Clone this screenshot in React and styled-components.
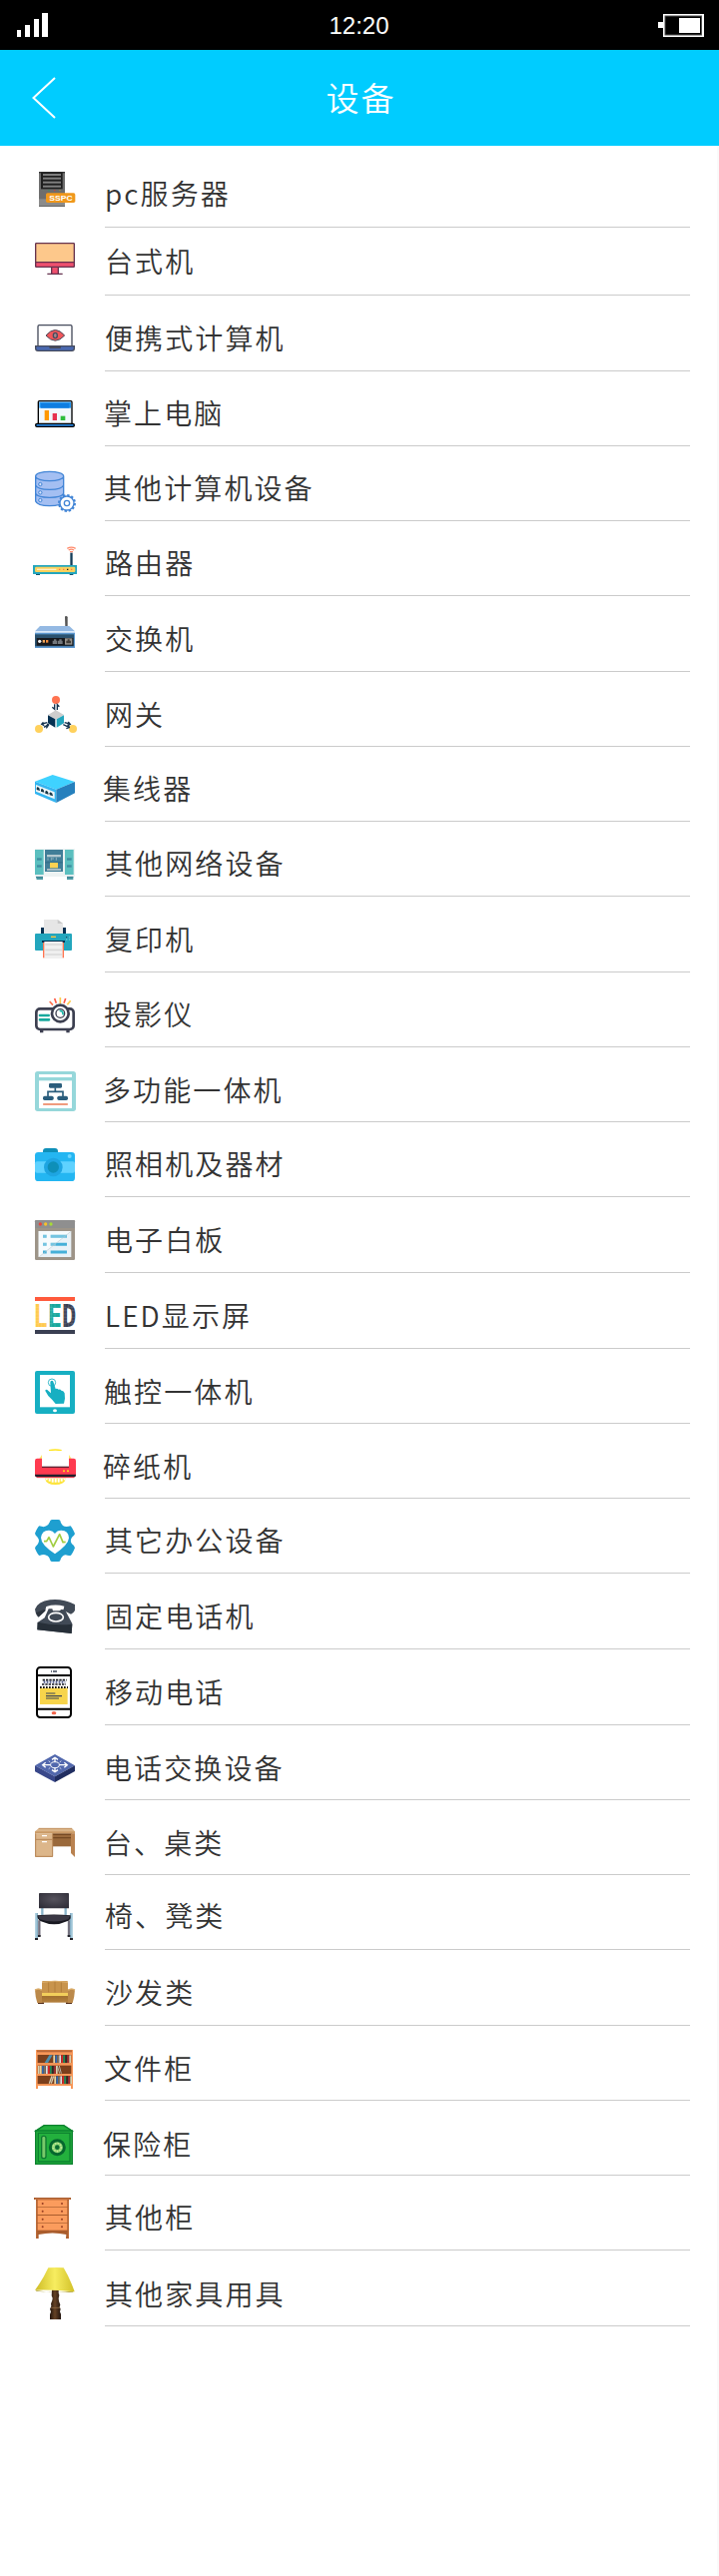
import React from "react";
import styled, { createGlobalStyle } from "styled-components";

const GlobalStyle = createGlobalStyle`
  body {
    margin: 0;
    background: #fff;
    font-family: "Noto Sans CJK SC", "Liberation Sans", sans-serif;
  }
`;

const Screen = styled.div`
  box-sizing: border-box;
  width: 720px;
  min-height: 2580px;
  display: flex;
  flex-direction: column;
  background: #fff;
`;

const StatusBar = styled.div`
  box-sizing: border-box;
  height: 50px;
  padding: 0 15px 0 17px;
  display: grid;
  grid-template-columns: 1fr auto 1fr;
  align-items: center;
  background: #000;
`;

const Clock = styled.span`
  padding: 1px 3px 0 0;
  color: #fff;
  font: 24px/26px "Liberation Sans", sans-serif;
`;

const BatterySlot = styled.span`
  display: flex;
  justify-content: flex-end;
`;

const Header = styled.header`
  box-sizing: border-box;
  height: 96px;
  padding: 0 32px;
  display: grid;
  grid-template-columns: 1fr auto 1fr;
  align-items: center;
  background: #00ccff;
`;

const BackButton = styled.button`
  justify-self: start;
  display: flex;
  padding: 0;
  border: 0;
  background: none;
`;

const Title = styled.h1`
  margin: 0;
  padding: 0 0 2px 3px;
  color: #fff;
  font-size: 33px;
  line-height: 48px;
  font-weight: 350;
  letter-spacing: 2px;
`;

const List = styled.ul`
  flex: 1;
  margin: 0;
  padding: 0 27px 0 0;
  border-right: 2px solid #fafafa;
  list-style: none;
`;

const Row = styled.li`
  display: flex;
  height: ${(p) => p.$height}px;
`;

const IconSlot = styled.span`
  box-sizing: border-box;
  flex: 0 0 105px;
  display: flex;
  align-items: flex-end;
  padding: 0 0 ${(p) => p.$lift}px ${(p) => p.$left}px;

  svg {
    display: block;
    flex: none;
    overflow: visible;
  }
`;

const Label = styled.span`
  box-sizing: border-box;
  flex: 1;
  display: flex;
  align-items: flex-end;
  padding-bottom: ${(p) => p.$lift}px;
  border-bottom: 1px solid #cbcbcb;
  color: #333;
  font-size: 28px;
  line-height: 28px;
  font-weight: 350;
  letter-spacing: 2.1px;
  white-space: nowrap;
`;

const LabelText = styled.span`
  margin-left: ${(p) => p.$shift}px;
`;

/* Every icon is drawn on a grid of three units to the pixel. */
const ServerIcon = () => (
  <>
    <rect x="117" y="66" width="78" height="105" fill="#6d6d6d" />
    <rect x="117" y="148" width="78" height="20" fill="#8b8b8b" />
    <rect x="117" y="168" width="78" height="3" fill="#666" />
    <rect x="117" y="66" width="78" height="4" fill="#333" />
    <rect x="123" y="68" width="65" height="50" fill="#1f1f1f" />
    {[72, 83, 95, 107].map((y) => (
      <rect key={y} x="129" y={y} width="54" height="6" fill="#7f7f7f" />
    ))}
    <circle cx="131" cy="122" r="2" fill="#6a7a6a" />
    <circle cx="147" cy="122" r="2" fill="#2b9a62" />
    <circle cx="164" cy="122" r="2" fill="#e03a2a" />
    <circle cx="180" cy="122" r="2" fill="#a89a30" />
    <rect x="138" y="130" width="88" height="29" rx="5" fill="#f0981c" />
    <text x="148" y="153" fontSize="20" fontWeight="700" fontFamily="Liberation Sans, sans-serif" textLength="70" lengthAdjust="spacingAndGlyphs" fill="#fff">SSPC</text>
  </>
);

const DesktopIcon = () => (
  <>
    <rect x="107" y="281" width="116" height="71" rx="3" fill="#fdc88b" />
    <rect x="107" y="338" width="116" height="14" fill="#f0506e" />
    <rect x="156" y="352" width="18" height="20" fill="#f0506e" />
    <path d="M109 281H221Q223 281 223 283V350Q223 352 221 352H109Q107 352 107 350V283Q107 281 109 281ZM107 338H223M155 353V371M175 353V371M142 373H188" fill="none" stroke="#66334f" strokeWidth="4" />
  </>
);

const LaptopEyeIcon = () => (
  <>
    <rect x="114" y="527" width="102" height="65" rx="4" fill="#fff" stroke="#464b5c" strokeWidth="4" />
    <path d="M138 558Q166 525 194 558Q166 589 138 558Z" fill="#f1565a" stroke="#464b5c" strokeWidth="3" />
    <ellipse cx="166" cy="558" rx="6" ry="8" fill="#a9858c" stroke="#464b5c" strokeWidth="4" />
    <path d="M107 590H223V597Q223 604 216 604H114Q107 604 107 597Z" fill="#4a68b0" stroke="#464b5c" strokeWidth="4" />
    <rect x="148" y="589" width="35" height="8" rx="2" fill="#464b5c" />
  </>
);

const LaptopChartIcon = () => (
  <>
    <rect x="115" y="65" width="101" height="70" rx="3" fill="#f0f7fd" stroke="#000" strokeWidth="4" />
    <rect x="118" y="68" width="95" height="18" fill="#2196f3" />
    <rect x="123" y="72" width="85" height="14" fill="#0f7de0" />
    <rect x="134" y="93" width="13" height="30" fill="#ff9800" />
    <rect x="158" y="102" width="13" height="21" fill="#e6304f" />
    <rect x="182" y="110" width="14" height="13" fill="#2dbd3d" />
    <rect x="107" y="133" width="116" height="9" rx="4" fill="#2380d8" stroke="#000" strokeWidth="4" />
  </>
);

const DatabaseIcon = () => (
  <>
    <path d="M107 291V366Q112 380 149 380Q186 380 191 366V291Z" fill="#a4bff2" />
    <ellipse cx="149" cy="291" rx="42" ry="14" fill="#a4bff2" />
    <path d="M107 291V366Q112 380 149 380Q186 380 191 366V291M107 291A42 14 0 0 1 191 291A42 14 0 0 1 107 291M107 318Q112 331 149 331Q186 331 191 318M107 343Q112 355 149 355Q186 355 191 343" fill="none" stroke="#4285d6" strokeWidth="4" />
    {[315, 340, 363].map((y) => (
      <circle key={y} cx="121" cy={y} r="5" fill="#d7e4fb" stroke="#4285d6" strokeWidth="3" />
    ))}
    <circle cx="201" cy="372" r="24" fill="none" stroke="#4285d6" strokeWidth="6" strokeDasharray="7 5.57" />
    <circle cx="201" cy="372" r="21" fill="#fff" stroke="#4285d6" strokeWidth="4" />
    <circle cx="201" cy="372" r="8" fill="#fff" stroke="#4285d6" strokeWidth="4" />
  </>
);

const RouterIcon = () => (
  <>
    <path d="M202 508Q214 501 227 508M206 513Q214 508 222 513M210 518H219" fill="none" stroke="#ff8a6b" strokeWidth="4" />
    <rect x="211" y="521" width="7" height="38" fill="#143e5a" />
    <rect x="108" y="582" width="12" height="6" fill="#12556f" />
    <rect x="209" y="582" width="11" height="6" fill="#12556f" />
    <rect x="99" y="558" width="132" height="27" fill="#23a6bd" />
    <rect x="105" y="563" width="121" height="16" rx="4" fill="#fbd15c" />
    <rect x="111" y="569" width="58" height="4" fill="#fff0c8" />
    <path d="M177 571H181M189 571H193M213 571H217" stroke="#ff7750" strokeWidth="4" />
    <path d="M201 571H205" stroke="#222" strokeWidth="4" />
  </>
);

const SwitchIcon = () => (
  <>
    <path d="M195 24Q195 21 198 21Q203 21 203 25V54H196Z" fill="#555" />
    <path d="M120 51H208L225 67H105Z" fill="#94b9e3" />
    <rect x="105" y="66" width="120" height="4" fill="#dceafb" />
    <rect x="105" y="71" width="120" height="46" fill="#5c97cf" />
    <rect x="105" y="76" width="117" height="36" fill="#2b526f" />
    <rect x="110" y="87" width="110" height="23" fill="#17191d" />
    <circle cx="119" cy="97" r="5" fill="#eee" />
    <rect x="128" y="93" width="7" height="8" fill="#f2a65a" />
    <rect x="138" y="93" width="7" height="8" fill="#f08b3c" />
    <path d="M158 105V95H162V91H169V95H172V105ZM174 105V95H178V91H185V95H188V105Z" fill="#72777c" />
    <rect x="195" y="88" width="22" height="19" fill="#97938c" />
    <path d="M199 103V95H203V91H209V95H213V103Z" fill="#403d39" />
  </>
);

const GatewayIcon = () => (
  <>
    <circle cx="168" cy="273" r="12" fill="#ff7350" />
    <circle cx="117" cy="360" r="12" fill="#ffd15c" />
    <circle cx="219" cy="360" r="12" fill="#ffd15c" />
    <path d="M168 304L192 318L168 332L144 318Z" fill="#cdcdcd" />
    <path d="M144 319L166 331V356L144 343Z" fill="#043051" />
    <path d="M170 331L192 319V343L170 356Z" fill="#23a6bd" />
    <path d="M164 286V301L157 295M172 303V287L178 293M126 345L142 341M130 340L125 346L133 350M146 347L132 355M141 345L146 348L139 358M210 345L194 341M205 339L211 346L202 349M190 347L207 355M206 349L208 356L199 359" fill="none" stroke="#17344f" strokeWidth="4" />
  </>
);

const HubIcon = () => (
  <>
    <path d="M158 498L225 519L169 542L105 518Z" fill="#3fd2ff" />
    <path d="M105 518L169 542V582L105 555Z" fill="#33b5f0" />
    <path d="M225 519V553L169 582V542Z" fill="#2680bd" />
    <path d="M108 528L164 550V571L108 548Z" fill="#edf5f7" />
    {[[115, 541], [128, 546], [141, 552], [154, 557]].map(([x, y]) => (
      <path key={x} d={`M${x - 5} ${y + 2}V${y - 4}L${x - 2} ${y - 7}L${x + 3} ${y - 3}L${x + 5} ${y + 5}Z`} fill="#173848" />
    ))}
  </>
);

const NetworkCabinetIcon = () => (
  <>
    <rect x="105" y="30" width="120" height="84" fill="#edf3f3" />
    {[105, 195].map((x) => (
      <g key={x}>
        <rect x={x} y="33" width="26" height="75" fill="#5bbfbf" />
        <rect x={x + 6} y="58" width="14" height="7" fill="#3e8ea0" />
        <rect x={x + 6} y="79" width="14" height="7" fill="#3e8ea0" />
      </g>
    ))}
    <rect x="135" y="33" width="54" height="66" fill="#417e98" />
    <rect x="141" y="48" width="42" height="7" fill="#b4c9d0" />
    <path d="M144 58V65M154 56V65M159 56V63M169 56V65" stroke="#8eb0bd" strokeWidth="3" />
    <rect x="136" y="70" width="52" height="3" fill="#2f6b85" />
    <rect x="150" y="72" width="24" height="16" fill="#fdd252" />
    <rect x="141" y="90" width="42" height="6" fill="#a7bcc4" />
    <path d="M108 114H129V123H110ZM201 114H220V123H201Z" fill="#4d9aa5" />
    <path d="M108 115H129M201 115H220" stroke="#3c7f90" strokeWidth="3" />
  </>
);

const PrinterIcon = () => (
  <>
    <rect x="123" y="267" width="75" height="18" fill="#043051" />
    <rect x="132" y="243" width="57" height="42" fill="#e6e6e6" />
    <path d="M173 243H189V255Z" fill="#fff" />
    <path d="M173 243V255H189Z" fill="#c9c9c9" />
    <rect x="105" y="285" width="111" height="51" rx="3" fill="#23a6bd" />
    <rect x="153" y="293" width="15" height="4" fill="#ffc43d" />
    <rect x="126" y="306" width="69" height="6" fill="#043051" />
    <rect x="129" y="312" width="63" height="46" fill="#ff7550" />
    <rect x="133" y="309" width="55" height="51" fill="#f0f0f0" />
    <path d="M136 318H186M136 334H186M136 348H186" stroke="#d9d9d9" strokeWidth="5" />
    <path d="M198 296H202M207 296H210M198 303H202M207 303H210" stroke="#6ac6d4" strokeWidth="4" />
    <rect x="198" y="294" width="4" height="4" fill="#14516b" />
  </>
);

const ProjectorIcon = () => (
  <>
    <path d="M149 489L159 500" stroke="#ff7350" strokeWidth="5" />
    <path d="M164 480L169 494M197 480L192 494" stroke="#ff5a45" strokeWidth="5" />
    <path d="M181 477V495M202 499L212 487" stroke="#ffcb4f" strokeWidth="5" />
    <path d="M125 574V583M204 574V583" stroke="#3c3f50" strokeWidth="10" />
    <rect x="109" y="511" width="112" height="62" rx="11" fill="#fff" stroke="#3c3f50" strokeWidth="8" />
    <circle cx="181" cy="525" r="25" fill="#fff" stroke="#3c3f50" strokeWidth="8" />
    <circle cx="181" cy="525" r="13" fill="#fff" stroke="#3c3f50" strokeWidth="4" />
    <path d="M179 517Q190 516 189 529" fill="none" stroke="#18b7a8" strokeWidth="5" />
    <path d="M120 531H146M120 544H147" stroke="#18a99d" strokeWidth="8" strokeLinecap="round" />
  </>
);

const MultifunctionIcon = () => (
  <>
    <rect x="105" y="39" width="123" height="120" rx="8" fill="#96d7da" />
    <rect x="117" y="48" width="99" height="9" fill="#fff" />
    <rect x="117" y="67" width="99" height="83" fill="#fff" />
    <path d="M166 88V101M144 116V100H189V116" fill="none" stroke="#2a5d7c" strokeWidth="5" />
    <rect x="147" y="75" width="39" height="14" rx="4" fill="#2a5d7c" />
    <rect x="129" y="113" width="32" height="13" rx="5" fill="#2a5d7c" />
    <rect x="172" y="113" width="32" height="13" rx="5" fill="#2a5d7c" />
    <rect x="129" y="135" width="75" height="6" rx="2" fill="#f09b7e" />
  </>
);

const CameraIcon = () => (
  <>
    <path d="M129 284V279Q129 270 138 270H165Q174 270 174 279V284Z" fill="#0e8fb8" />
    <rect x="105" y="282" width="120" height="87" rx="10" fill="#24b6f2" />
    <rect x="105" y="310" width="120" height="34" rx="6" fill="#5fd2ff" />
    <circle cx="160" cy="327" r="28" fill="#1ea5e2" />
    <circle cx="160" cy="327" r="17" fill="#0e8fb8" />
    <circle cx="209" cy="294" r="6" fill="#6cd6ff" />
  </>
);

const WhiteboardIcon = () => (
  <>
    <rect x="105" y="486" width="120" height="120" rx="4" fill="#9d9488" />
    <path d="M105 510V490Q105 486 109 486H221Q225 486 225 490V510Z" fill="#8f8f8f" />
    <circle cx="121" cy="498" r="5" fill="#e9443c" />
    <circle cx="137" cy="498" r="5" fill="#f6c22b" />
    <circle cx="153" cy="498" r="5" fill="#a7dc35" />
    <rect x="116" y="519" width="98" height="78" fill="#e9f2f8" />
    <path d="M116 519H214L116 597Z" fill="#f7fbfd" />
    {[535, 559, 582].map((y) => (
      <path key={y} d={`M129 ${y}H140M152 ${y}H201`} stroke="#45b0d8" strokeWidth="9" />
    ))}
    <path d="M129 535H140M152 535H200M129 559H140M152 559H168" stroke="#fff" strokeWidth="9" opacity="0.25" />
    <path d="M118 596L213 520" stroke="#b9c4c9" strokeWidth="1.5" />
  </>
);

const LedIcon = () => (
  <>
    <rect x="105" y="27" width="120" height="12" fill="#ff5a3c" />
    <rect x="105" y="126" width="120" height="12" fill="#3a3f52" />
    <text x="100" y="117" fontFamily="DejaVu Sans Mono, monospace" fontWeight="700" fontSize="94" textLength="129" lengthAdjust="spacingAndGlyphs">
      <tspan fill="#ffc94d">L</tspan>
      <tspan fill="#16a79c">E</tspan>
      <tspan fill="#3a3f52">D</tspan>
    </text>
    <path d="M105 58H225M105 68H225M105 78H225M105 88H225M105 98H225M105 107H225M115 48V117M125 48V117M135 48V117M155 48V117M165 48V117M195 48V117M206 48V117M216 48V117" stroke="#fff" strokeWidth="1" opacity="0.35" />
  </>
);

const TouchIcon = () => (
  <>
    <rect x="105" y="249" width="120" height="129" rx="6" fill="#17afc2" />
    <rect x="120" y="261" width="90" height="97" fill="#fff" />
    <ellipse cx="165" cy="368" rx="6" ry="4.5" fill="#fff" />
    <circle cx="156" cy="284" r="11" fill="none" stroke="#17afc2" strokeWidth="2.5" />
    <path d="M151 284Q151 278 156 278Q160 278 161 284L167 303Q172 300 176 305Q181 303 184 308Q191 307 194 316L195 332L192 347L167 348L157 336Q143 325 136 309Q136 304 142 306L153 316Z" fill="#17afc2" />
  </>
);

const ShredderIcon = () => (
  <>
    <path d="M147 488Q166 484 185 488" fill="none" stroke="#ffe51f" strokeWidth="4" />
    <path d="M118 513L126 501V513ZM207 501L215 513H207Z" fill="#fdea6a" />
    <path d="M135 572H198Q193 591 166 591Q139 591 135 572Z" fill="#fde43a" />
    <rect x="105" y="512" width="123" height="57" rx="7" fill="#ff3b50" />
    <path d="M105 560H228Q228 568 221 568H112Q105 568 105 560Z" fill="#22202c" />
    <path d="M111 569H222" stroke="#e33a4b" strokeWidth="3" />
    <rect x="126" y="490" width="81" height="48" fill="#fff" />
    <rect x="126" y="536" width="81" height="4" fill="#612130" />
    <circle cx="192" cy="550" r="3" fill="#ffe31f" />
    <circle cx="204" cy="550" r="3" fill="#ffe31f" />
    {[137, 146, 155, 164, 173, 182, 191].map((x, i) => (
      <rect key={x} x={x} y="573" width="6" height={[4, 8, 11, 11, 11, 8, 4][i]} fill="#fff" />
    ))}
  </>
);

const GearHeartIcon = () => (
  <>
    <path d="M151 39Q153 36 157 36H175Q179 36 181 39Q183 49 189 54Q197 60 212 55Q216 59 225 78Q225 82 216 89Q209 99 216 109Q225 115 225 121Q218 138 213 143Q208 146 197 142Q185 144 181 158Q180 162 175 162H157Q152 162 151 158Q147 145 139 143Q131 139 119 144Q114 143 105 122Q105 117 113 110Q121 99 113 89Q105 82 105 77Q112 60 118 55Q133 60 139 55Q148 50 151 39Z" fill="#1e9fd0" />
    <path d="M165 139Q123 111 123 90Q126 67 148 68Q159 69 165 78Q171 68 184 68Q206 68 207 91Q206 111 165 139Z" fill="#fff" />
    <path d="M132 101H140L147 89L160 117L179 80L189 104L197 103" fill="none" stroke="#a1cd42" strokeWidth="5" strokeLinejoin="round" />
  </>
);

const TelephoneIcon = () => (
  <>
    <path d="M105 305Q113 283 150 277Q187 272 225 291V309Q221 317 213 320L190 308L193 296Q165 289 139 297L135 311L116 329Q108 325 105 305Z" fill="#414a56" />
    <path d="M116 328L138 308L132 306L108 316Z" fill="#2c333d" />
    <path d="M146 304H157L159 310H179L184 306L195 307L217 349L215 378L112 367L113 345L134 331Z" fill="#414a56" />
    <path d="M113 344Q162 355 217 350L215 378L112 367Z" fill="#272f38" />
    <ellipse cx="168" cy="329" rx="22" ry="13" fill="#414a56" stroke="#fff" strokeWidth="5" />
  </>
);

const MobileIcon = () => (
  <>
    <rect x="111" y="480" width="102" height="150" rx="10" fill="#fff" stroke="#000" strokeWidth="6" />
    <path d="M111 504H213M111 605H213" stroke="#000" strokeWidth="6" />
    <path d="M153 492H156M159 492H171" stroke="#3d4557" strokeWidth="4" />
    <rect x="120" y="538" width="83" height="53" fill="#f7d44b" />
    <rect x="120" y="516" width="83" height="26" fill="#fff" />
    <path d="M128 518H200M126 531H198" stroke="#16181f" strokeWidth="5" strokeDasharray="7 3" />
    <path d="M131 524H196" stroke="#4e5a8c" strokeWidth="7" strokeDasharray="5 4" />
    <path d="M120 540H204" stroke="#111" strokeWidth="6" strokeDasharray="5 4" />
    <path d="M138 558H166M138 566H186M138 573H177" stroke="#3d4557" strokeWidth="3.5" />
    <ellipse cx="162" cy="617" rx="7" ry="5" fill="#f1654c" />
  </>
);

const ExchangeIcon = () => (
  <>
    <path d="M165 51L225 85L165 118L105 85Z" fill="#5268ad" />
    <path d="M105 85L165 118V135L105 103Z" fill="#39488a" />
    <path d="M225 85V102L165 135V118Z" fill="#202d60" />
    <ellipse cx="165" cy="83" rx="13" ry="9" fill="#5268ad" stroke="#fff" strokeWidth="3" />
    <path d="M165 74V62M156 67L165 61L174 67M165 92V103M156 98L165 104L174 98M152 83H131M137 76L128 83L137 91M178 83H199M193 76L202 83L193 91" fill="none" stroke="#fff" strokeWidth="4" />
    <path d="M151 75L146 71M179 75L184 71M151 91L146 95M179 91L184 95" stroke="#cfd6ef" strokeWidth="3" />
  </>
);

const DeskIcon = () => (
  <>
    <path d="M117 273H216L225 283V289H105V283Z" fill="#dab487" />
    <path d="M116 274H216" stroke="#c39362" strokeWidth="3" />
    <rect x="105" y="283" width="120" height="6" fill="#ca9a66" />
    <rect x="158" y="289" width="57" height="39" fill="#9a693b" />
    <path d="M158 292H215M158 302H215" stroke="#754922" strokeWidth="4" />
    <path d="M213 289H225V360L213 348Z" fill="#b98250" />
    <rect x="105" y="289" width="54" height="71" fill="#dcb68a" />
    <path d="M107 289V358H158V289M107 307H158" fill="none" stroke="#b68556" strokeWidth="3" />
    <path d="M126 296H141M126 314H141" stroke="#fff" strokeWidth="4" />
  </>
);

const ChairIcon = () => (
  <>
    <defs>
      <radialGradient id="chairBack" cx="0.5" cy="0.4" r="0.8">
        <stop offset="0" stopColor="#56535d" />
        <stop offset="1" stopColor="#292832" />
      </radialGradient>
    </defs>
    <path d="M127 512V535M197 512V535" stroke="#8bb5cb" strokeWidth="7" />
    <path d="M118 550V598M207 550V598" stroke="#74717e" strokeWidth="7" />
    <path d="M110 528V605M214 528V605" stroke="#87b0c6" strokeWidth="8" />
    <path d="M108 528V603M216 528V603" stroke="#b7d9e8" strokeWidth="3" />
    <path d="M105 606H114M210 606H219M114 597H122M203 597H211" stroke="#23232a" strokeWidth="6" />
    <rect x="117" y="468" width="90" height="46" rx="2" fill="url(#chairBack)" />
    <path d="M112 535Q162 530 212 535Q214 550 201 553Q163 571 123 553Q112 548 112 535Z" fill="#181820" />
    <path d="M114 536Q162 532 210 536L205 547Q163 560 119 547Z" fill="#3a3844" />
  </>
);

const SofaIcon = () => (
  <>
    <defs>
      <linearGradient id="sofaSeat" x1="0" y1="0" x2="0" y2="1">
        <stop offset="0" stopColor="#ddb243" />
        <stop offset="0.35" stopColor="#a27130" />
        <stop offset="1" stopColor="#b58240" />
      </linearGradient>
    </defs>
    <path d="M114 106H132V111H114ZM198 106H216V111H198Z" fill="#55301c" />
    <rect x="126" y="42" width="78" height="40" rx="4" fill="#c8944c" />
    <path d="M146 44V76M165 44V76M184 44V76" stroke="#b37f3a" strokeWidth="3" />
    <path d="M126 46Q165 39 204 46" fill="none" stroke="#dfb372" strokeWidth="3" />
    <rect x="120" y="79" width="90" height="28" fill="url(#sofaSeat)" />
    <rect x="126" y="78" width="78" height="9" fill="#f2cf5b" />
    <path d="M105 68Q115 62 126 68V108H112Q106 90 105 68ZM225 68Q215 62 204 68V108H218Q224 90 225 68Z" fill="#bb894a" />
    <path d="M105 70Q115 63 125 70M225 70Q215 63 205 70" fill="none" stroke="#dcae6b" strokeWidth="4" />
  </>
);

const bookColors = ["#d8d1b0", "#2b2b2b", "#d8242c", "#74726a", "#ead6a0", "#9a2830", "#1d8c58", "#dbe0e4", "#2f69b2"];
const BookRow = ({ x, y, count }) =>
  Array.from({ length: count }, (_, i) => (
    <rect key={i} x={x + i * 6} y={y} width="5" height="24" fill={bookColors[(i * 4 + y) % bookColors.length]} />
  ));

const BookcaseIcon = () => (
  <>
    <path d="M108 249H219V366H213V357H114V366H108Z" fill="#f89757" />
    <rect x="111" y="250" width="105" height="6" fill="#b7673a" />
    <rect x="113" y="264" width="101" height="25" fill="#7b3f1c" />
    <rect x="113" y="296" width="101" height="25" fill="#7b3f1c" />
    <rect x="113" y="327" width="101" height="25" fill="#7b3f1c" />
    <path d="M134 288L148 265H158L144 288Z" fill="#4b8fae" />
    <BookRow x={160} y={265} count={9} />
    <BookRow x={114} y={297} count={10} />
    <path d="M172 297L179 320M178 297L184 320" stroke="#b7b5aa" strokeWidth="3" />
    <path d="M148 350L156 328M154 350L161 328" stroke="#d4c9b0" strokeWidth="4" />
    <BookRow x={163} y={328} count={9} />
    <path d="M112 291H215M112 323H215M110 354H216" stroke="#f89757" strokeWidth="4" />
  </>
);

const SafeIcon = () => (
  <>
    <path d="M132 474H192L219 492V594H105V492Z" fill="#23b03d" />
    <path d="M133 476H191L216 492H108ZM107 492H217V592H107ZM115 499H210V585H115Z" fill="none" stroke="#0d8230" strokeWidth="4" />
    <rect x="125" y="508" width="13" height="67" rx="6" fill="#78c969" stroke="#0d7a30" strokeWidth="4" />
    <circle cx="172" cy="542" r="21" fill="#85d671" stroke="#06672e" strokeWidth="9" />
    <circle cx="172" cy="542" r="12" fill="none" stroke="#c8e69b" strokeWidth="5" strokeDasharray="4 4" />
    <circle cx="172" cy="542" r="7" fill="#0b6b32" />
  </>
);

const DresserIcon = () => (
  <>
    <path d="M108 129H207V246H198L199 234Q158 225 116 234V246H108Z" fill="#aa5d2d" />
    <rect x="102" y="123" width="111" height="6" fill="#a85b2c" />
    <path d="M105 127H210" stroke="#d98a57" strokeWidth="2" />
    {[130, 153, 177, 200].map((y) => (
      <g key={y}>
        <rect x="113" y={y} width="89" height="21" fill="#fb9c5d" />
        <circle cx="128" cy={y + 11} r="3" fill="#983e22" />
        <circle cx="186" cy={y + 11} r="3" fill="#983e22" />
      </g>
    ))}
    <path d="M110 132V245M205 132V245" stroke="#c77642" strokeWidth="2" />
  </>
);

const LampIcon = () => (
  <>
    <defs>
      <linearGradient id="lampShade">
        <stop offset="0" stopColor="#cdbb25" />
        <stop offset="0.5" stopColor="#f7ed60" />
        <stop offset="1" stopColor="#d1c028" />
      </linearGradient>
      <linearGradient id="lampBase">
        <stop offset="0" stopColor="#21130c" />
        <stop offset="0.45" stopColor="#664225" />
        <stop offset="1" stopColor="#21130c" />
      </linearGradient>
    </defs>
    <path d="M107 401Q165 414 223 403L219 407Q165 410 109 404Z" fill="#b2a33c" />
    <path d="M156 400H176V410L178 416L176 426Q176 435 181 445L179 452L182 458L180 466L183 473V489H150V474L153 466L150 458L154 449L153 442Q158 432 158 425L155 418Z" fill="url(#lampBase)" />
    <path d="M145 334Q168 332 191 334Q210 365 224 406Q165 399 105 401Q130 367 145 334Z" fill="url(#lampShade)" />
    <path d="M153 454H181" stroke="#a07a4f" strokeWidth="2" />
  </>
);

const devices = [
  { name: "pc服务器", height: 82, lift: 20, indent: 0, icon: ServerIcon, box: [117, 66, 108, 105], iconLift: 21 },
  { name: "台式机", height: 68, lift: 20, indent: 0, icon: DesktopIcon, box: [105, 279, 120, 96], iconLift: 21 },
  { name: "便携式计算机", height: 76, lift: 19, indent: 0, icon: LaptopEyeIcon, box: [105, 525, 120, 81], iconLift: 20 },
  { name: "掌上电脑", height: 75, lift: 19, indent: -1, icon: LaptopChartIcon, box: [105, 63, 120, 81], iconLift: 19 },
  { name: "其他计算机设备", height: 75, lift: 19, indent: -1, icon: DatabaseIcon, box: [105, 276, 123, 123], iconLift: 9 },
  { name: "路由器", height: 75, lift: 19, indent: 0, icon: RouterIcon, box: [99, 504, 132, 84], iconLift: 21 },
  { name: "交换机", height: 76, lift: 19, indent: 0, icon: SwitchIcon, box: [105, 21, 120, 96], iconLift: 24 },
  { name: "网关", height: 75, lift: 18, indent: 0, icon: GatewayIcon, box: [105, 261, 126, 111], iconLift: 14 },
  { name: "集线器", height: 75, lift: 19, indent: -2, icon: HubIcon, box: [105, 498, 120, 84], iconLift: 19 },
  { name: "其他网络设备", height: 75, lift: 19, indent: 0, icon: NetworkCabinetIcon, box: [105, 30, 120, 93], iconLift: 17 },
  { name: "复印机", height: 76, lift: 19, indent: 0, icon: PrinterIcon, box: [105, 243, 111, 117], iconLift: 14 },
  { name: "投影仪", height: 75, lift: 19, indent: -1, icon: ProjectorIcon, box: [105, 477, 120, 108], iconLift: 14 },
  { name: "多功能一体机", height: 75, lift: 18, indent: -2, icon: MultifunctionIcon, box: [105, 39, 123, 120], iconLift: 11 },
  { name: "照相机及器材", height: 75, lift: 19, indent: 0, icon: CameraIcon, box: [105, 270, 120, 99], iconLift: 16 },
  { name: "电子白板", height: 76, lift: 19, indent: 0, icon: WhiteboardIcon, box: [105, 486, 120, 120], iconLift: 13 },
  { name: "LED显示屏", height: 76, lift: 19, indent: 0, icon: LedIcon, box: [105, 27, 120, 111], iconLift: 15 },
  { name: "触控一体机", height: 75, lift: 18, indent: -1, icon: TouchIcon, box: [105, 249, 120, 129], iconLift: 10 },
  { name: "碎纸机", height: 75, lift: 18, indent: -2, icon: ShredderIcon, box: [105, 486, 123, 105], iconLift: 14 },
  { name: "其它办公设备", height: 75, lift: 19, indent: 0, icon: GearHeartIcon, box: [105, 36, 120, 126], iconLift: 12 },
  { name: "固定电话机", height: 76, lift: 19, indent: 0, icon: TelephoneIcon, box: [105, 276, 120, 102], iconLift: 16 },
  { name: "移动电话", height: 76, lift: 19, indent: 0, icon: MobileIcon, box: [108, 477, 108, 156], iconLift: 7 },
  { name: "电话交换设备", height: 75, lift: 18, indent: -1, icon: ExchangeIcon, box: [105, 51, 120, 84], iconLift: 18 },
  { name: "台、桌类", height: 75, lift: 18, indent: -1, icon: DeskIcon, box: [105, 273, 120, 87], iconLift: 18 },
  { name: "椅、凳类", height: 75, lift: 20, indent: 0, icon: ChairIcon, box: [105, 468, 114, 141], iconLift: 10 },
  { name: "沙发类", height: 76, lift: 19, indent: 0, icon: SofaIcon, box: [105, 42, 120, 69], iconLift: 22 },
  { name: "文件柜", height: 75, lift: 18, indent: -1, icon: BookcaseIcon, box: [108, 249, 111, 117], iconLift: 12 },
  { name: "保险柜", height: 75, lift: 17, indent: -2, icon: SafeIcon, box: [105, 474, 114, 120], iconLift: 11 },
  { name: "其他柜", height: 75, lift: 19, indent: 0, icon: DresserIcon, box: [102, 123, 111, 123], iconLift: 12 },
  { name: "其他家具用具", height: 76, lift: 18, indent: 0, icon: LampIcon, box: [105, 333, 120, 156], iconLift: 7 },
];

function DeviceRow({ device }) {
  const { name, height, lift, indent, icon: Art, box, iconLift } = device;
  return (
    <Row $height={height}>
      <IconSlot $left={box[0] / 3} $lift={iconLift}>
        <svg width={box[2] / 3} height={box[3] / 3} viewBox={box.join(" ")} aria-hidden="true">
          <Art />
        </svg>
      </IconSlot>
      <Label $lift={lift}>
        <LabelText $shift={indent}>{name}</LabelText>
      </Label>
    </Row>
  );
}

export default function App() {
  return (
    <Screen>
      <GlobalStyle />
      <StatusBar>
        <svg width="32" height="25" viewBox="0 0 32 25" fill="#fff" aria-hidden="true">
          <rect x="0" y="17" width="4" height="7" />
          <rect x="8" y="12" width="5" height="12" />
          <rect x="17" y="6" width="5" height="18" />
          <rect x="25" y="0" width="6" height="24" />
        </svg>
        <Clock>12:20</Clock>
        <BatterySlot>
          <svg width="46" height="23" viewBox="0 0 46 23" aria-hidden="true">
            <rect x="0" y="8" width="6" height="6" fill="#fff" />
            <rect x="6" y="1" width="39" height="21" fill="#000" stroke="#fff" strokeWidth="2" />
            <rect x="7" y="2" width="36.5" height="19" fill="none" stroke="#555" strokeWidth="1" />
            <rect x="21" y="4" width="21" height="15" fill="#fff" />
          </svg>
        </BatterySlot>
      </StatusBar>
      <Header>
        <BackButton aria-label="返回">
          <svg width="24" height="42" viewBox="0 0 24 42" fill="none" stroke="#fff" strokeWidth="2" aria-hidden="true">
            <path d="M23 1L1.5 21L23 41" />
          </svg>
        </BackButton>
        <Title>设备</Title>
      </Header>
      <List>
        {devices.map((device) => (
          <DeviceRow key={device.name} device={device} />
        ))}
      </List>
    </Screen>
  );
}
